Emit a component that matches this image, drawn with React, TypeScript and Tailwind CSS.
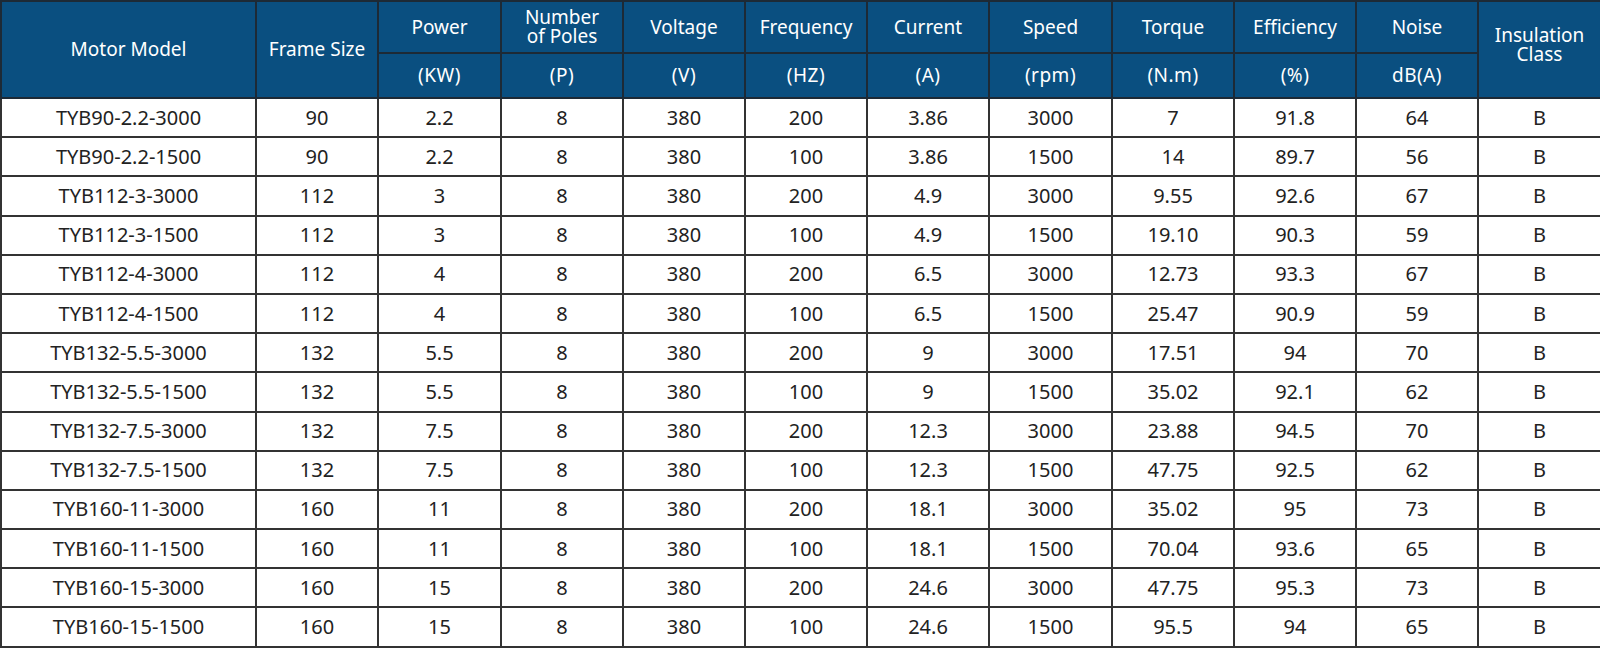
import React from "react";

const rows = [
  ["TYB90-2.2-3000", "90", "2.2", "8", "380", "200", "3.86", "3000", "7", "91.8", "64", "B"],
  ["TYB90-2.2-1500", "90", "2.2", "8", "380", "100", "3.86", "1500", "14", "89.7", "56", "B"],
  ["TYB112-3-3000", "112", "3", "8", "380", "200", "4.9", "3000", "9.55", "92.6", "67", "B"],
  ["TYB112-3-1500", "112", "3", "8", "380", "100", "4.9", "1500", "19.10", "90.3", "59", "B"],
  ["TYB112-4-3000", "112", "4", "8", "380", "200", "6.5", "3000", "12.73", "93.3", "67", "B"],
  ["TYB112-4-1500", "112", "4", "8", "380", "100", "6.5", "1500", "25.47", "90.9", "59", "B"],
  ["TYB132-5.5-3000", "132", "5.5", "8", "380", "200", "9", "3000", "17.51", "94", "70", "B"],
  ["TYB132-5.5-1500", "132", "5.5", "8", "380", "100", "9", "1500", "35.02", "92.1", "62", "B"],
  ["TYB132-7.5-3000", "132", "7.5", "8", "380", "200", "12.3", "3000", "23.88", "94.5", "70", "B"],
  ["TYB132-7.5-1500", "132", "7.5", "8", "380", "100", "12.3", "1500", "47.75", "92.5", "62", "B"],
  ["TYB160-11-3000", "160", "11", "8", "380", "200", "18.1", "3000", "35.02", "95", "73", "B"],
  ["TYB160-11-1500", "160", "11", "8", "380", "100", "18.1", "1500", "70.04", "93.6", "65", "B"],
  ["TYB160-15-3000", "160", "15", "8", "380", "200", "24.6", "3000", "47.75", "95.3", "73", "B"],
  ["TYB160-15-1500", "160", "15", "8", "380", "100", "24.6", "1500", "95.5", "94", "65", "B"],
];

// middle columns: title on top row, unit underneath
const mid = [
  ["Power", "(KW)"],
  ["Number\nof Poles", "(P)"],
  ["Voltage", "(V)"],
  ["Frequency", "(HZ)"],
  ["Current", "(A)"],
  ["Speed", "(rpm)"],
  ["Torque", "(N.m)"],
  ["Efficiency", "(%)"],
  ["Noise", "dB(A)"],
];

const widths = [255, 122, 123, 122, 122, 122, 122, 123, 122, 122, 122, 123];

export default function App() {
  const th = "border-2 border-[#1d2a36] bg-[#0a4f80] text-white font-normal text-center align-middle p-0";
  return (
    <div className="w-[1600px] h-[648px] bg-white overflow-hidden" style={{ fontFamily: '"Noto Sans", "Open Sans", sans-serif' }}>
      <table className="table-fixed border-collapse w-[1600px] border-2 border-[#3a3a3a]">
        <colgroup>
          {widths.map((w, i) => (
            <col key={i} style={{ width: w }} />
          ))}
        </colgroup>
        <thead>
          <tr className="h-[52px]">
            <th rowSpan={2} className={th + " text-[19px]"}>Motor Model</th>
            <th rowSpan={2} className={th + " text-[19px]"}>Frame Size</th>
            {mid.map(([t], i) => (
              <th key={i} className={th + " text-[19px] leading-[19px] whitespace-pre-line"}>
                {t}
              </th>
            ))}
            <th rowSpan={2} className={th + " text-[19px] leading-[19px] whitespace-pre-line pb-[10px]"}>
              {"Insulation\nClass"}
            </th>
          </tr>
          <tr className="h-[45px]">
            {mid.map(([, u], i) => (
              <th key={i} className={th + " text-[19px] tracking-[0.5px]"}>
                {u}
              </th>
            ))}
          </tr>
        </thead>
        <tbody>
          {rows.map((r, i) => (
            <tr key={i} className="h-[39.2px]">
              {r.map((c, j) => (
                <td key={j} className="border-2 border-[#333] text-center text-[20px] leading-[24px] text-[#222] p-0">
                  {c}
                </td>
              ))}
            </tr>
          ))}
        </tbody>
      </table>
    </div>
  );
}
